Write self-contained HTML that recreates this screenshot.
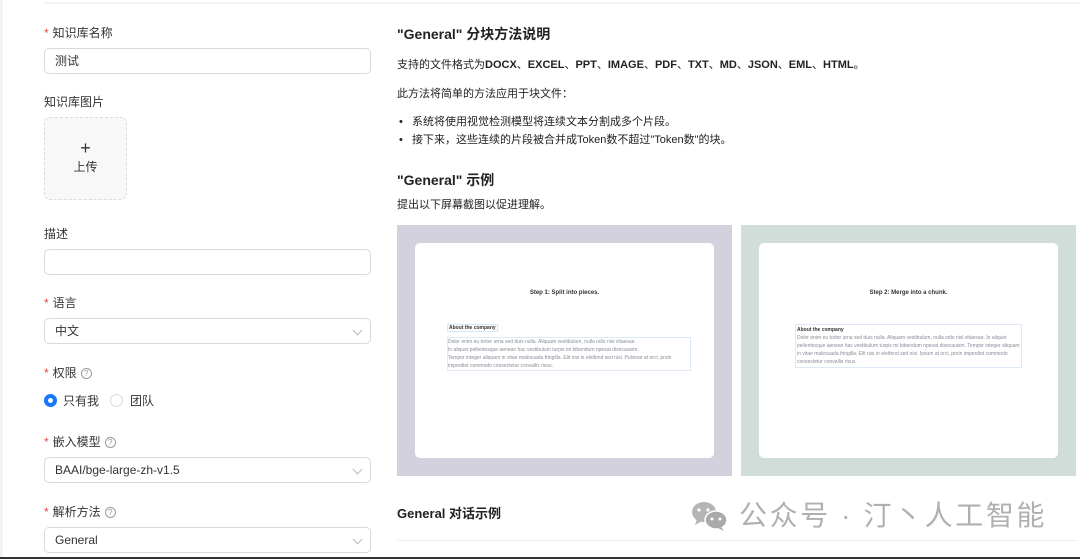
<!DOCTYPE html>
<html><head><meta charset="utf-8"><style>
*{box-sizing:border-box;margin:0;padding:0}
body{width:1080px;height:559px;background:#fff;position:relative;overflow:hidden;font-family:"Liberation Sans","Noto Sans CJK SC",sans-serif;color:#222;font-size:12px}
.a{position:absolute}
.lbl{position:absolute;left:44px;font-size:12px;color:#333}
.lbl .s{color:#e5484d;margin-right:4px}
.inp{position:absolute;left:44px;width:327px;height:26px;border:1px solid #d9d9d9;border-radius:5px;padding-left:10px;line-height:24px;font-size:12px;color:#333;background:#fff}
.arr{position:absolute;right:9px;top:8px;width:7px;height:7px;border-right:1px solid #bbb;border-bottom:1px solid #bbb;transform:rotate(45deg)}
.q{display:inline-block;width:11px;height:11px;border:1px solid #999;border-radius:50%;font-size:8px;line-height:9px;text-align:center;color:#999;margin-left:4px;vertical-align:1px}
.t{position:absolute;left:397px;font-size:11px;color:#222}
h3{position:absolute;left:397px;font-size:14px;font-weight:bold;color:#222}
.lt{font-size:5px;color:#8a8a9a;line-height:8px}
</style></head><body>
<div class="a" style="left:44px;top:2px;width:1036px;height:2px;background:#f2f2f4"></div>
<div class="a" style="left:0;top:0;width:3px;height:559px;background:#f4f4f6"></div>

<div class="lbl" style="top:24px"><span class="s">*</span>知识库名称</div>
<div class="inp" style="top:48px">测试</div>
<div class="lbl" style="top:93px">知识库图片</div>
<div class="a" style="left:44px;top:117px;width:83px;height:83px;border:1px dashed #ddd;border-radius:6px;background:#f8f8f8;text-align:center;font-size:12px;color:#333"><div style="font-size:18px;margin-top:20px;line-height:20px">+</div><div>上传</div></div>
<div class="lbl" style="top:225px">描述</div>
<div class="inp" style="top:249px"></div>
<div class="lbl" style="top:294px"><span class="s">*</span>语言</div>
<div class="inp" style="top:318px">中文<span class="arr"></span></div>
<div class="lbl" style="top:364px"><span class="s">*</span>权限<span class="q">?</span></div>
<div class="a" style="left:44px;top:394px;width:13px;height:13px;border-radius:50%;border:4px solid #1677ff"></div>
<div class="a" style="left:63px;top:392px;font-size:12px;color:#333">只有我</div>
<div class="a" style="left:110px;top:394px;width:13px;height:13px;border-radius:50%;border:1px solid #d9d9d9"></div>
<div class="a" style="left:130px;top:392px;font-size:12px;color:#333">团队</div>
<div class="lbl" style="top:433px"><span class="s">*</span>嵌入模型<span class="q">?</span></div>
<div class="inp" style="top:457px">BAAI/bge-large-zh-v1.5<span class="arr"></span></div>
<div class="lbl" style="top:503px"><span class="s">*</span>解析方法<span class="q">?</span></div>
<div class="inp" style="top:527px">General<span class="arr"></span></div>

<h3 style="top:24px">"General" 分块方法说明</h3>
<div class="t" style="top:56px">支持的文件格式为<b>DOCX</b>、<b>EXCEL</b>、<b>PPT</b>、<b>IMAGE</b>、<b>PDF</b>、<b>TXT</b>、<b>MD</b>、<b>JSON</b>、<b>EML</b>、<b>HTML</b>。</div>
<div class="t" style="top:85px">此方法将简单的方法应用于块文件：</div>
<div class="t" style="top:113px;left:399px">•&nbsp;&nbsp;&nbsp;系统将使用视觉检测模型将连续文本分割成多个片段。</div>
<div class="t" style="top:131px;left:399px">•&nbsp;&nbsp;&nbsp;接下来，这些连续的片段被合并成Token数不超过"Token数"的块。</div>
<h3 style="top:170px">"General" 示例</h3>
<div class="t" style="top:196px">提出以下屏幕截图以促进理解。</div>

<div class="a" style="left:397px;top:225px;width:335px;height:251px;background:#d4d1df">
 <div class="a" style="left:18px;top:18px;width:299px;height:215px;background:#fff;border-radius:5px">
  <div class="a" style="left:0;width:299px;top:47px;text-align:center;font-size:6px;font-weight:bold;color:#333">Step 1: Split into pieces.</div>
  <div class="a" style="left:32px;top:81px;font-size:5px;font-weight:bold;color:#333;border:1px solid #d6e6f7;padding:0 1px">About the company</div>
  <div class="a lt" style="left:32px;top:94px;width:244px;border:1px solid #dde9f7">Dolor enim eu tortor urna sed duis nulla. Aliquam vestibulum, nulla odio nisl vitaesae.<br>In aliquet pellentesque aenean hac vestibulum turpis mi bibendum npexat dixecauism.<br>Tempor integer aliquam in vitae malesuada fringilla. Elit nisi in eleifend sed nisi. Pulvinar at orci, proin imperdiet commodo consectetur convallis risus.</div>
 </div>
</div>
<div class="a" style="left:741px;top:225px;width:335px;height:251px;background:#d1ddd8">
 <div class="a" style="left:18px;top:18px;width:299px;height:215px;background:#fff;border-radius:5px">
  <div class="a" style="left:0;width:299px;top:47px;text-align:center;font-size:6px;font-weight:bold;color:#333">Step 2: Merge into a chunk.</div>
  <div class="a lt" style="left:36px;top:81px;width:227px;border:1px solid #dde9f7;padding:1px"><b style="color:#333">About the company</b><br>Dolor enim eu tortor urna sed duis nulla. Aliquam vestibulum, nulla odio nisl vitaesae. In aliquet pellentesque aenean hac vestibulum turpis mi bibendum npexat dixecauism. Tempor integer aliquam in vitae malesuada fringilla. Elit nisi in eleifend sed nisi. Ipsum at orci, proin imperdiet commodo consectetur convallis risus.</div>
 </div>
</div>

<h3 style="top:503px;font-size:13px">General 对话示例</h3>
<div class="a" style="left:397px;top:540px;width:680px;height:1px;background:#eee"></div>
<svg class="a" style="left:689px;top:500px" width="42" height="32" viewBox="0 0 42 32"><ellipse cx="15" cy="12" rx="12" ry="10" fill="#b5b5b5"/><path d="M8 19 L6 25 L13 21Z" fill="#b5b5b5"/><ellipse cx="27" cy="20" rx="11" ry="9" fill="#aaa" stroke="#fff" stroke-width="1.5"/><path d="M32 27 L35 31 L29 28Z" fill="#aaa"/><circle cx="10" cy="10" r="1.6" fill="#fff"/><circle cx="19" cy="10" r="1.6" fill="#fff"/><circle cx="23" cy="19" r="1.5" fill="#fff"/><circle cx="31" cy="19" r="1.5" fill="#fff"/></svg>
<div class="a" style="left:739px;top:498px;font-size:28px;color:#b0b0b0;letter-spacing:2.6px;line-height:36px">公众号 · 汀丶人工智能</div>
<div class="a" style="left:0;top:557px;width:1080px;height:2px;background:#333"></div>
</body></html>
